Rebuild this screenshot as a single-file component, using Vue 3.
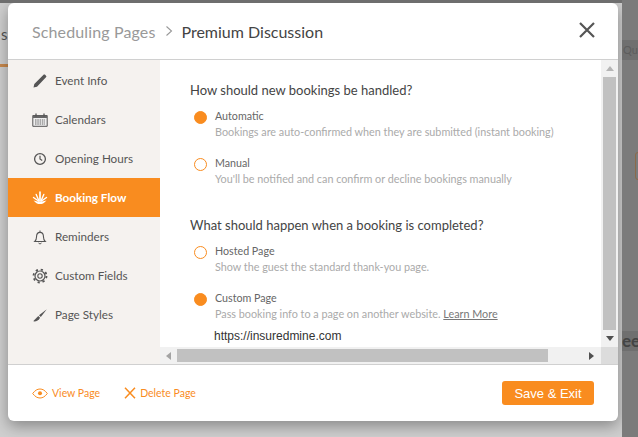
<template>
  <div class="page">
    <div class="bg-left">
      <span class="bg-s">s</span>
      <div class="bg-line"></div>
    </div>
    <div class="bg-right">
      <div class="bg-row qu">Qu</div>
      <div class="bg-row ee">ee</div>
      <div class="bg-box"></div>
    </div>
    <div class="modal">
      <header class="head">
        <span class="crumb">Scheduling Pages</span>
        <svg class="chev" viewBox="0 0 8 12" width="8" height="12"><path d="M1.500 1.500 6.500 6l-5 4.500" fill="none" stroke="#999" stroke-width="1.100" /></svg>
        <span class="title">Premium Discussion</span>
        <svg class="close" viewBox="0 0 16 16" width="16" height="16"><path d="M1 1 15 15M15 1 1 15" stroke="#555" stroke-width="2.200" /></svg>
      </header>
      <div class="body">
        <nav class="side">
          <a v-for="item in items" :key="item.label" class="nav-item" :class="{ active: item.active }">
            <svg class="nav-icon" viewBox="0 0 16 16" width="16" height="16" v-html="item.icon"></svg>
            <span class="nav-label">{{ item.label }}</span>
          </a>
        </nav>
        <div class="content">
          <div class="scroll-view">
            <h3 class="q">How should new bookings be handled?</h3>
            <div class="opt on first">
              <i class="radio"></i>
              <div>
                <div class="opt-name">Automatic</div>
                <div class="opt-desc">Bookings are auto-confirmed when they are submitted (instant booking)</div>
              </div>
            </div>
            <div class="opt">
              <i class="radio"></i>
              <div>
                <div class="opt-name">Manual</div>
                <div class="opt-desc">You'll be notified and can confirm or decline bookings manually</div>
              </div>
            </div>
            <h3 class="q second">What should happen when a booking is completed?</h3>
            <div class="opt first">
              <i class="radio"></i>
              <div>
                <div class="opt-name">Hosted Page</div>
                <div class="opt-desc">Show the guest the standard thank-you page.</div>
              </div>
            </div>
            <div class="opt on">
              <i class="radio"></i>
              <div>
                <div class="opt-name">Custom Page</div>
                <div class="opt-desc">Pass booking info to a page on another website. <u>Learn More</u></div>
                <div class="url">https://insuredmine.com</div>
              </div>
            </div>
          </div>
          <div class="vbar">
            <svg viewBox="0 0 8 5" width="8" height="5"><path d="M0 5 4 0l4 5z" fill="#b5b5b5" /></svg>
            <div class="vthumb"></div>
            <svg viewBox="0 0 8 5" width="8" height="5"><path d="M0 0h8L4 5z" fill="#505050" /></svg>
          </div>
          <div class="hbar">
            <svg viewBox="0 0 5 8" width="5" height="8"><path d="M5 0v8L0 4z" fill="#a3a3a3" /></svg>
            <div class="hthumb"></div>
            <svg viewBox="0 0 5 8" width="5" height="8"><path d="M0 0v8l5-4z" fill="#505050" /></svg>
          </div>
          <div class="corner"></div>
        </div>
      </div>
      <footer class="foot">
        <a class="link view">
          <svg viewBox="0 0 16 11" width="16" height="11"><path d="M.7 5.500C3 2.400 5.300 1 8 1s5 1.400 7.300 4.500C13 8.600 10.700 10 8 10S3 8.600.7 5.500z" fill="none" stroke="#f98c1f" /><circle cx="8" cy="5.300" r="2" fill="#f98c1f" /></svg>
          View Page
        </a>
        <a class="link del">
          <svg viewBox="0 0 12 12" width="12" height="12"><path d="M1 .8 11 11.200M11 .8 1 11.200" stroke="#f98c1f" stroke-width="1.500" /></svg>
          Delete Page
        </a>
        <button class="save">Save &amp; Exit</button>
      </footer>
    </div>
  </div>
</template>

<script setup>
const items = [
  { label: 'Event Info', icon: '<path d="M1.500 14.500l.8-3.600 9.500-9.300c.3-.3.8-.3 1.100 0l1.300 1.300c.3.300.3.800 0 1.100L5 13.700z" fill="#555"/>' },
  { label: 'Calendars', icon: '<path d="M.8 3.500h14.400v10.800H.8z" fill="#eee" stroke="#555"/><path d="M1 3.500h14v2.500H1z" fill="#666"/><path d="M4 1.500v3M12 1.500v3" stroke="#555" stroke-width="1.300"/><path d="M3 8h10M3 10h10M3 12h10" stroke="#666" stroke-dasharray="1.500 .8"/>' },
  { label: 'Opening Hours', icon: '<circle cx="8" cy="8" r="5.400" fill="none" stroke="#555" stroke-width="1.300"/><path d="M8 4.800V8l2.200 1.600" fill="none" stroke="#555" stroke-width="1.200"/>' },
  { label: 'Booking Flow', active: true, icon: '<g stroke="#fff" stroke-linecap="round" fill="none"><path d="M8 11V2" stroke-width="1.700"/><path d="M7 11 4.200 4.500M9 11l2.800-6.500" stroke-width="1.400"/><path d="M6.500 11 1.500 7.500M9.500 11l5-3.500" stroke-width="1.400"/></g><path d="M1.500 10.500C4 13.500 6 14 8 14s4-.5 6.500-3.500L8 12z" fill="#fff"/>' },
  { label: 'Reminders', icon: '<path d="M2.800 12.500c1.100-1 1.700-2.200 1.700-4.500 0-2.500 1.300-4.600 3.500-4.600s3.500 2.100 3.500 4.600c0 2.300.6 3.500 1.700 4.500z" fill="none" stroke="#555" stroke-width="1.100"/><path d="M8 1.500v2M6.500 14c.5 1 2.500 1 3 0" fill="none" stroke="#555"/>' },
  { label: 'Custom Fields', icon: '<circle cx="8" cy="8" r="2.200" fill="none" stroke="#555" stroke-width="1.100"/><circle cx="8" cy="8" r="5" fill="none" stroke="#555" stroke-width="1.200"/><circle cx="8" cy="8" r="6.500" fill="none" stroke="#555" stroke-width="1.800" stroke-dasharray="2.200 2.900"/>' },
  { label: 'Page Styles', icon: '<path d="M14.800 2.200 7 8.200 8.800 10z" fill="#555"/><path d="M6.300 8.900 1.200 14.300c2.700.4 5.200-.5 6.900-3.500z" fill="#555"/>' }
]
</script>

<style>
html, body { margin: 0; }
</style>

<style scoped>
.page {
  position: relative;
  width: 638px;
  height: 437px;
  overflow: hidden;
  background: #cfcfcf;
  font-family: Lato, "Open Sans", sans-serif;
}
.bg-left {
  position: absolute;
  left: 0;
  top: 3px;
  width: 8px;
  height: 434px;
  color: #555;
  font-size: 15px;
}
.bg-s { position: absolute; left: 1px; top: 22px; }
.bg-line { position: absolute; left: 0; top: 61px; width: 8px; height: 3px; background: #c98a4e; }
.bg-right {
  position: absolute;
  z-index: 2;
  right: 0;
  top: 0;
  width: 16px;
  height: 437px;
  background: #7b7b7b;
}
.bg-row { position: absolute; left: 0; width: 16px; color: #555; overflow: hidden; white-space: nowrap; }
.qu { top: 40px; height: 20px; background: #6f6f6f; font-size: 11px; line-height: 20px; padding-left: 1px; color: #5d5d5d; }
.ee { top: 331px; height: 20px; background: #6f6f6f; font-size: 17px; line-height: 20px; color: #444; font-weight: 700; }
.bg-box { position: absolute; left: 13px; top: 152px; width: 6px; height: 26px; border: 1px solid #8b6a4a; border-radius: 3px; }
.page::before {
  content: "";
  position: absolute;
  z-index: 2;
  left: 0;
  top: 0;
  width: 100%;
  height: 3px;
  background: #6e6e6e;
}
.modal {
  position: absolute;
  left: 8px;
  top: 3px;
  width: 610px;
  height: 418px;
  display: flex;
  flex-direction: column;
  background: #fff;
  border-radius: 6px;
  box-shadow: 0 5px 15px rgba(0, 0, 0, 0.35);
  overflow: hidden;
}
.head {
  display: flex;
  align-items: center;
  height: 56px;
  padding: 0 23px 0 24px;
  border-bottom: 1px solid #d0d0d0;
  font-size: 16px;
  flex: none;
}
.crumb { color: #999; letter-spacing: 0.13px; }
.chev { margin: 0 8px 0 10px; }
.title { color: #444; }
.close { margin-left: auto; margin-top: -2px; }
.body { flex: 1; display: flex; min-height: 0; }
.side {
  width: 152px;
  flex: none;
  background: #f5f2ef;
  display: flex;
  flex-direction: column;
  padding-top: 1px;
}
.nav-item {
  height: 39px;
  display: flex;
  align-items: center;
  gap: 7px;
  padding-left: 24px;
  font-size: 11.700px;
  color: #555;
}
.nav-label { margin-top: -2px; }
.nav-item.active { background: #f98c1f; color: #fff; font-weight: 700; }
.nav-icon { flex: none; }
.content {
  flex: 1;
  display: grid;
  grid-template-columns: 1fr 17px;
  grid-template-rows: 1fr 17px;
  min-width: 0;
  min-height: 0;
}
.scroll-view {
  padding: 20px 0 0 30px;
  overflow: hidden;
  min-height: 0;
}
.q { margin: 0; font-size: 13px; font-weight: 400; line-height: 20px; color: #444; }
.q.second { margin-top: 28px; }
.opt { display: flex; gap: 8px; margin-top: 15px; padding-left: 4px; }
.opt.first { margin-top: 8px; }
.radio {
  flex: none;
  width: 11px;
  height: 11px;
  margin-top: 3px;
  border: 1px solid #f98c1f;
  border-radius: 50%;
}
.on .radio { background: #f98c1f; }
.opt-name { font-size: 10.700px; line-height: 16px; color: #666; }
.opt-desc { font-size: 10.800px; line-height: 16px; color: #aaa; white-space: nowrap; }
.opt-desc u { color: #777; }
.url { font-family: "Liberation Sans", Arial, sans-serif; font-size: 12px; line-height: 18px; color: #333; margin-top: 5px; margin-left: -1px; }
.vbar {
  background: #f1f1f1;
  display: flex;
  flex-direction: column;
  align-items: center;
  justify-content: space-between;
  padding: 6px 0;
}
.vthumb { width: 13px; flex: 1; background: #c1c1c1; margin: 6px 0; }
.hbar {
  background: #f1f1f1;
  display: flex;
  align-items: center;
  padding: 0 7px 0 6px;
}
.hthumb { width: 371px; height: 13px; background: #c1c1c1; margin: 0 auto 0 6px; }
.corner { background: #dcdcdc; }
.foot {
  flex: none;
  height: 56px;
  border-top: 1px solid #d0d0d0;
  display: flex;
  align-items: center;
  padding: 0 24px;
  font-size: 10.500px;
  color: #f98c1f;
}
.link { display: flex; align-items: center; gap: 4px; }
.del { margin-left: 24px; }
.save {
  margin-left: auto;
  width: 92px;
  height: 24px;
  padding: 0;
  border: none;
  border-radius: 3px;
  background: #f98c1f;
  color: #fff;
  font-family: "Liberation Sans", Arial, sans-serif;
  font-size: 13px;
}
</style>
